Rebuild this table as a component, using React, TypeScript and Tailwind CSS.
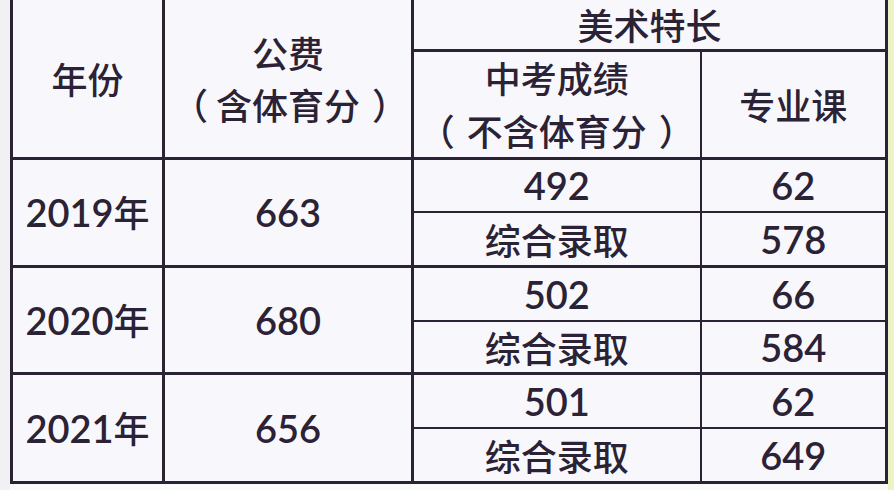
const rows = [
  { year: "2019", fee: "663", score: "492", major: "62", total: "578", h: ["h-[54px]", "h-[54px]"] },
  { year: "2020", fee: "680", score: "502", major: "66", total: "584", h: ["h-[55px]", "h-[52px]"] },
  { year: "2021", fee: "656", score: "501", major: "62", total: "649", h: ["h-[55px]", "h-[54px]"] },
];

const cjk = "font-['Noto_Sans_CJK_SC',sans-serif] font-medium text-[36px]";
const num = "font-['Lato','Noto_Sans_CJK_SC',sans-serif] font-semibold text-[38px]";
const cell = "border-[3px] border-solid border-[#2b2233] bg-[#f8f8fc] text-center align-middle p-0";

export default function App() {
  return (
    <div className="flex h-[490px] w-[894px] bg-[#fbfbfc] text-[#2b2235]">
      <div className="h-full w-[10px] bg-[#f1f1f4]" />
      <div className="flex flex-col">
        <table className="table-fixed border-collapse leading-none">
          <colgroup>
            <col className="w-[152px]" />
            <col className="w-[249px]" />
            <col className="w-[288px]" />
            <col className="w-[186px]" />
          </colgroup>
          <thead>
            <tr className="h-[50px]">
              <td rowSpan={2} className={`${cell} border-t-0 ${cjk}`}>
                年份
              </td>
              <td rowSpan={2} className={`${cell} border-t-0 ${cjk}`}>
                <div className="leading-[52px]">公费</div>
                <div className="leading-[52px]">
                  <span className="inline-block -translate-x-[8px]">（</span>含体育分
                  <span className="inline-block translate-x-[12px]">）</span>
                </div>
              </td>
              <td colSpan={2} className={`${cell} border-t-0 ${cjk}`}>
                美术特长
              </td>
            </tr>
            <tr className="h-[103px]">
              <td className={`${cell} border-r-2 ${cjk}`}>
                <div className="leading-[51px]">中考成绩</div>
                <div className="leading-[54px]">
                  <span className="inline-block -translate-x-[12px]">（</span>不含体育分
                  <span className="inline-block translate-x-[12px]">）</span>
                </div>
              </td>
              <td className={`${cell} border-l-2 ${cjk}`}>专业课</td>
            </tr>
          </thead>
          <tbody>
            {rows.map((r) => (
              <>
                <tr key={r.year + "a"} className={r.h[0]}>
                  <td rowSpan={2} className={`${cell} ${num}`}>
                    {r.year}
                    <span className="font-['Noto_Sans_CJK_SC',sans-serif] font-medium text-[36px]">年</span>
                  </td>
                  <td rowSpan={2} className={`${cell} ${num}`}>
                    {r.fee}
                  </td>
                  <td className={`${cell} border-r-2 border-b-2 ${num}`}>{r.score}</td>
                  <td className={`${cell} border-l-2 border-b-2 ${num}`}>{r.major}</td>
                </tr>
                <tr key={r.year + "b"} className={r.h[1]}>
                  <td className={`${cell} border-r-2 border-t-2 ${cjk}`}>综合录取</td>
                  <td className={`${cell} border-l-2 border-t-2 ${num}`}>{r.total}</td>
                </tr>
              </>
            ))}
          </tbody>
        </table>
      </div>
      <div className="h-full flex-1 bg-[#eef3c6]" />
    </div>
  );
}
